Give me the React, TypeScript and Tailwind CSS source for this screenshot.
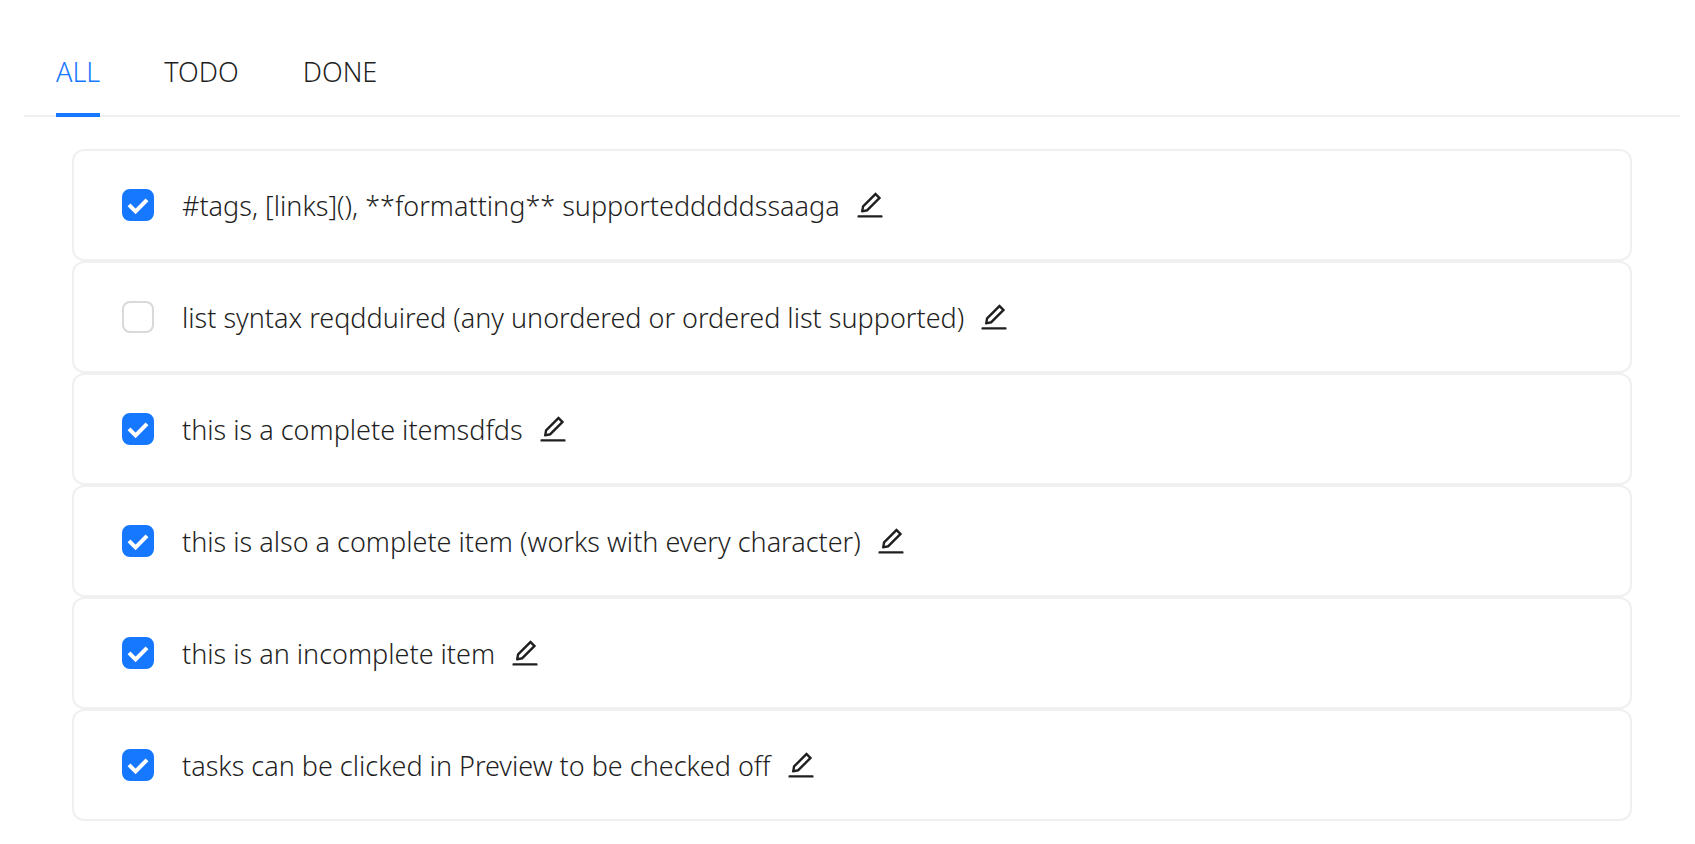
import { useState } from "react";
import { AiOutlineEdit } from "react-icons/ai";

type Filter = "ALL" | "TODO" | "DONE";

interface Task {
  id: number;
  text: string;
  done: boolean;
}

const filters: Filter[] = ["ALL", "TODO", "DONE"];

const initialTasks: Task[] = [
  { id: 1, text: "#tags, [links](), **formatting** supportedddddssaaga", done: true },
  { id: 2, text: "list syntax reqdduired (any unordered or ordered list supported)", done: false },
  { id: 3, text: "this is a complete itemsdfds", done: true },
  { id: 4, text: "this is also a complete item (works with every character)", done: true },
  { id: 5, text: "this is an incomplete item", done: true },
  { id: 6, text: "tasks can be clicked in Preview to be checked off", done: true },
];

function TaskRow({ task, onToggle }: { task: Task; onToggle: () => void }) {
  const inputId = `task-${task.id}`;
  return (
    <li className="flex h-28 items-center rounded-xl border-2 border-[#f0f0f0] px-12">
      <span className="grid shrink-0">
        <input
          id={inputId}
          type="checkbox"
          checked={task.done}
          onChange={onToggle}
          className="peer col-start-1 row-start-1 size-8 cursor-pointer appearance-none rounded-lg border-2 border-[#d9d9d9] bg-white checked:border-[#1677ff] checked:bg-[#1677ff]"
        />
        <svg
          viewBox="0 0 32 32"
          className="pointer-events-none col-start-1 row-start-1 hidden size-8 peer-checked:block"
          fill="none"
          stroke="white"
          strokeWidth="4"
          aria-hidden="true"
        >
          <path d="M7 15.8L13.6 22.4L25 10.8" />
        </svg>
      </span>
      <label htmlFor={inputId} className="ml-7 cursor-pointer pt-0.5">
        {task.text}
      </label>
      <button type="button" aria-label="Edit task" className="ml-3.5 cursor-pointer">
        <AiOutlineEdit className="size-8" />
      </button>
    </li>
  );
}

export default function App() {
  const [filter, setFilter] = useState<Filter>("ALL");
  const [tasks, setTasks] = useState(initialTasks);

  const toggle = (id: number) =>
    setTasks((all) => all.map((t) => (t.id === id ? { ...t, done: !t.done } : t)));

  const visible = tasks.filter((t) => filter === "ALL" || t.done === (filter === "DONE"));

  return (
    <main className="min-h-screen bg-white pt-8 pr-[15px] pl-6 font-['Noto_Sans','Open_Sans',sans-serif] text-[27px] leading-10 font-light text-[#1f1f1f]">
      <div role="tablist" className="flex gap-16 border-b-2 border-[#f0f0f0] px-8">
        {filters.map((name) => (
          <button
            key={name}
            type="button"
            role="tab"
            aria-selected={filter === name}
            onClick={() => setFilter(name)}
            className="-mb-0.5 h-[85px] cursor-pointer border-b-4 border-transparent pb-0.5 aria-selected:border-[#1677ff] aria-selected:text-[#1677ff]"
          >
            {name}
          </button>
        ))}
      </div>
      <ul className="mt-8 mr-12 ml-12">
        {visible.map((task) => (
          <TaskRow key={task.id} task={task} onToggle={() => toggle(task.id)} />
        ))}
      </ul>
    </main>
  );
}
